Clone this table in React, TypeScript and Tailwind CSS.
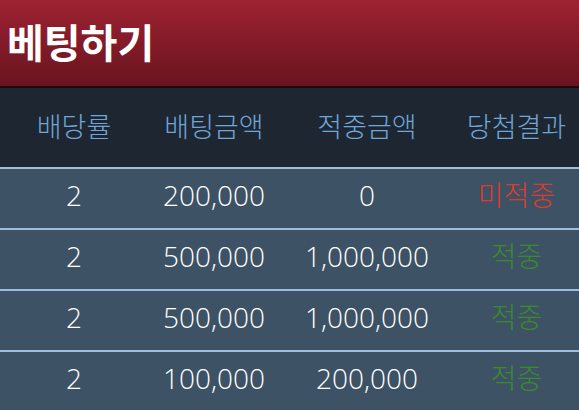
const rows = [
  { odds: "2", bet: "200,000", win: "0", result: "미적중", hit: false },
  { odds: "2", bet: "500,000", win: "1,000,000", result: "적중", hit: true },
  { odds: "2", bet: "500,000", win: "1,000,000", result: "적중", hit: true },
  { odds: "2", bet: "100,000", win: "200,000", result: "적중", hit: true },
];

const cols = "grid grid-cols-[148px_132px_174px_1fr] items-center text-center";

export default function App() {
  return (
    <div className="h-[410px] w-[579px] overflow-hidden bg-[#3d5264] font-['Open_Sans','Noto_Sans_CJK_KR',sans-serif]">
      <header className="flex h-[88px] items-center border-b-2 border-[#1a0b0d] bg-gradient-to-b from-[#9e2232] to-[#69141f] pl-[7px]">
        <h1 className="text-[40px] font-bold leading-none text-white">베팅하기</h1>
      </header>

      <div className={`${cols} h-[79px] bg-[#1e2731] text-[27px] font-light text-[#6ea6d8]`}>
        <div>배당률</div>
        <div>배팅금액</div>
        <div>적중금액</div>
        <div>당첨결과</div>
      </div>

      {rows.map((row, i) => (
        <div
          key={i}
          className={`${cols} h-[61px] border-t-2 border-[#9dbfdb] pb-[7px] text-[28px] font-light text-white`}
        >
          <div>{row.odds}</div>
          <div>{row.bet}</div>
          <div>{row.win}</div>
          <div className={row.hit ? "text-[#3b8a2c]" : "text-[#de3a30]"}>{row.result}</div>
        </div>
      ))}
    </div>
  );
}
